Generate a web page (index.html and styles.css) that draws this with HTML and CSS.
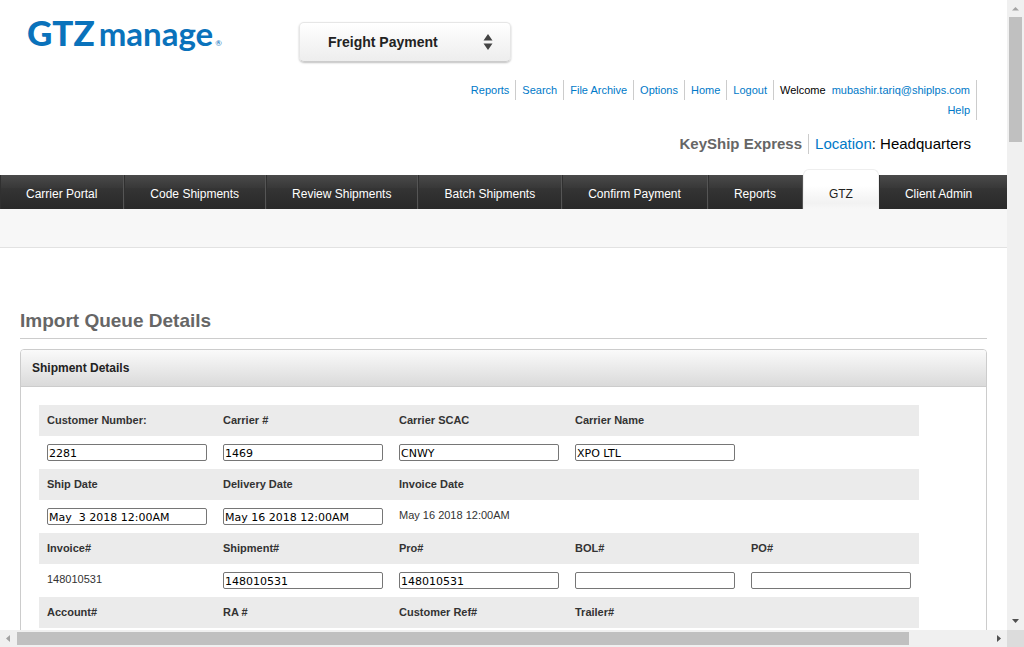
FILE: index.html
```html
<!DOCTYPE html>
<html lang="en">
<head>
<meta charset="utf-8">
<title>Import Queue Details</title>
<link rel="stylesheet" href="styles.css">
</head>
<body>
<div class="window">
  <div class="page">
    <header class="header">
      <div class="brand-row">
        <a class="logo" href="#"><span class="logo-gtz">GTZ</span><span class="logo-manage">manage</span><span class="logo-mark">®</span></a>
        <div class="module">
          <select class="module-select" aria-label="Module">
            <option>Freight Payment</option>
          </select>
          <svg class="module-arrows" width="10" height="16" viewBox="0 0 10 16" aria-hidden="true"><path d="M5 0 9.500 6.500H.5zM5 16 .5 9.500h9z" fill="#444"/></svg>
        </div>
      </div>
      <ul class="links">
        <li><a href="#">Reports</a></li>
        <li><a href="#">Search</a></li>
        <li><a href="#">File Archive</a></li>
        <li><a href="#">Options</a></li>
        <li><a href="#">Home</a></li>
        <li><a href="#">Logout</a></li>
        <li class="account">
          <div class="welcome"><span>Welcome</span><a href="#">mubashir.tariq@shiplps.com</a></div>
          <a href="#">Help</a>
        </li>
      </ul>
      <div class="company">
        <strong class="company-name">KeyShip Express</strong>
        <span class="location"><a href="#">Location</a>: Headquarters</span>
      </div>
    </header>
    <nav class="nav">
      <a href="#">Carrier Portal</a>
      <a href="#">Code Shipments</a>
      <a href="#">Review Shipments</a>
      <a href="#">Batch Shipments</a>
      <a href="#">Confirm Payment</a>
      <a href="#">Reports</a>
      <a href="#" class="active">GTZ</a>
      <a href="#" class="last">Client Admin</a>
    </nav>
    <div class="subnav"></div>
    <main class="main">
      <h1 class="title">Import Queue Details</h1>
      <section class="panel">
        <h2 class="panel-head">Shipment Details</h2>
        <div class="panel-body">
          <table class="details">
            <tr>
              <th><label for="customer">Customer Number:</label></th>
              <th><label for="carrier">Carrier #</label></th>
              <th><label for="scac">Carrier SCAC</label></th>
              <th><label for="carrier-name">Carrier Name</label></th>
              <th></th>
            </tr>
            <tr>
              <td><input id="customer" type="text" value="2281"></td>
              <td><input id="carrier" type="text" value="1469"></td>
              <td><input id="scac" type="text" value="CNWY"></td>
              <td><input id="carrier-name" type="text" value="XPO LTL"></td>
              <td></td>
            </tr>
            <tr>
              <th><label for="ship-date">Ship Date</label></th>
              <th><label for="delivery-date">Delivery Date</label></th>
              <th>Invoice Date</th>
              <th></th>
              <th></th>
            </tr>
            <tr>
              <td><input id="ship-date" type="text" value="May  3 2018 12:00AM"></td>
              <td><input id="delivery-date" type="text" value="May 16 2018 12:00AM"></td>
              <td>May 16 2018 12:00AM</td>
              <td></td>
              <td></td>
            </tr>
            <tr>
              <th>Invoice#</th>
              <th><label for="shipment">Shipment#</label></th>
              <th><label for="pro">Pro#</label></th>
              <th><label for="bol">BOL#</label></th>
              <th><label for="po">PO#</label></th>
            </tr>
            <tr>
              <td>148010531</td>
              <td><input id="shipment" type="text" value="148010531"></td>
              <td><input id="pro" type="text" value="148010531"></td>
              <td><input id="bol" type="text"></td>
              <td><input id="po" type="text"></td>
            </tr>
            <tr>
              <th>Account#</th>
              <th>RA #</th>
              <th>Customer Ref#</th>
              <th>Trailer#</th>
              <th></th>
            </tr>
          </table>
        </div>
      </section>
    </main>
  </div>
  <div class="bar bar-v" aria-hidden="true">
    <svg width="17" height="17" viewBox="0 0 17 17"><path d="M5 10.500h7L8.500 7z" fill="#a3a3a3"/></svg>
    <div class="track"><div class="thumb"></div></div>
    <svg width="17" height="17" viewBox="0 0 17 17"><path d="M5 6h7l-3.500 4z" fill="#505050"/></svg>
  </div>
  <div class="bar bar-h" aria-hidden="true">
    <svg width="17" height="17" viewBox="0 0 17 17"><path d="M10 5v7L6 8.500z" fill="#a3a3a3"/></svg>
    <div class="track"><div class="thumb"></div></div>
    <svg width="17" height="17" viewBox="0 0 17 17"><path d="M7 5v7l4-3.500z" fill="#505050"/></svg>
  </div>
  <div class="corner"></div>
</div>
</body>
</html>
```
FILE: styles.css
```css
* {
  box-sizing: border-box;
}

body {
  margin: 0;
  background: #fff;
  color: #333;
  font: 11px/20px "Liberation Sans", Arial, sans-serif;
}

a {
  color: #0079c8;
  text-decoration: none;
}

.window {
  display: grid;
  grid-template-columns: minmax(0, 1fr) 17px;
  grid-template-rows: minmax(0, 1fr) 17px;
  height: 100vh;
}

.page {
  overflow: hidden;
}

.brand-row {
  display: flex;
  gap: 74px;
  height: 80px;
  padding: 12px 0 0 27px;
}

.logo {
  display: flex;
  align-items: baseline;
  width: 198px;
  height: 48px;
  color: #0a72bb;
  font-family: Lato, sans-serif;
  line-height: 40px;
}

.logo-gtz {
  font-size: 35px;
  font-weight: 900;
}

.logo-manage {
  margin-left: 4px;
  font-size: 33px;
  font-weight: 700;
}

.logo-mark {
  margin-left: 2px;
  font-size: 8px;
}

.module {
  position: relative;
  width: 212px;
  height: 40px;
  margin-top: 10px;
}

.module-select {
  width: 100%;
  height: 100%;
  padding: 0 28px;
  appearance: none;
  border: 1px solid #e6e6e6;
  border-bottom-color: #ccc;
  border-radius: 5px;
  background: linear-gradient(#fff, #ededed);
  box-shadow: 0 1px 2px rgba(0, 0, 0, 0.25);
  color: #222;
  font: bold 14px "Liberation Sans", Arial, sans-serif;
}

.module-arrows {
  position: absolute;
  top: 12px;
  right: 18px;
  pointer-events: none;
}

.links {
  display: flex;
  justify-content: flex-end;
  align-items: flex-start;
  margin: 0;
  padding: 0 30px 0 0;
  list-style: none;
}

.links li {
  padding: 0 6px;
  border-right: 1px solid #ccc;
}

.links .account {
  color: #000;
  text-align: right;
}

.welcome {
  display: flex;
  gap: 6px;
}

.company {
  display: flex;
  justify-content: flex-end;
  padding: 14px 36px 21px 0;
  font-size: 15px;
}

.company-name {
  padding-right: 6px;
  border-right: 1px solid #ccc;
  color: #666;
}

.location {
  padding-left: 6px;
  color: #000;
}

.nav {
  display: flex;
  height: 34px;
  background: linear-gradient(#4a4a4a, #383838 38%, #343434 40%, #292929);
  font-size: 12px;
  line-height: 38px;
  white-space: nowrap;
}

.nav a {
  padding: 0 26px 0 25px;
  border-right: 1px solid #555;
  border-left: 1px solid #303030;
  color: #fff;
}

.nav .active {
  height: 40px;
  margin-top: -6px;
  padding: 5px 25px 0;
  border: 1px solid #eee;
  border-bottom: 0;
  border-radius: 6px 6px 0 0;
  background: linear-gradient(#fff 40%, #f2f2f2 85%, #f7f7f7);
  color: #222;
}

.nav .last {
  border-right: 0;
}

.subnav {
  height: 39px;
  border-bottom: 1px solid #e2e2e2;
  background: #f7f7f7;
}

.main {
  padding: 60px 20px 0;
}

.title {
  margin: 0 0 10px;
  padding-bottom: 4px;
  border-bottom: 1px solid #ccc;
  color: #666;
  font-size: 19px;
  line-height: 26px;
}

.panel {
  border: 1px solid #ccc;
  border-radius: 4px 4px 0 0;
}

.panel-head {
  margin: 0;
  padding: 0 11px;
  border-bottom: 1px solid #ccc;
  border-radius: 3px 3px 0 0;
  background: linear-gradient(#fafafa, #dadada);
  color: #222;
  font-size: 12px;
  line-height: 36px;
}

.panel-body {
  padding: 18px;
}

.details {
  width: 100%;
  max-width: 880px;
  border-collapse: collapse;
  table-layout: fixed;
}

.details th,
.details td {
  padding: 8px;
  line-height: 15px;
  text-align: left;
  vertical-align: top;
}

.details th {
  background: #ebebeb;
}

.details input {
  display: block;
  width: 100%;
  height: 17px;
  padding: 1px 1px 0;
  border: 1px solid #767676;
  border-radius: 2px;
  background: #fff;
  color: #000;
  font: 11px "DejaVu Sans", Verdana, sans-serif;
  white-space: pre;
}

.bar {
  display: flex;
  background: #f0f0f0;
}

.bar-v {
  flex-direction: column;
}

.track {
  flex: 1;
}

.thumb {
  background: #c0c0c0;
}

.bar-v .thumb {
  width: 13px;
  height: 21%;
  margin: 0 auto;
}

.bar-h .thumb {
  width: calc(100% * 11 / 12);
  height: 13px;
  margin-top: 2px;
}

.corner {
  background: #dcdcdc;
}
```
